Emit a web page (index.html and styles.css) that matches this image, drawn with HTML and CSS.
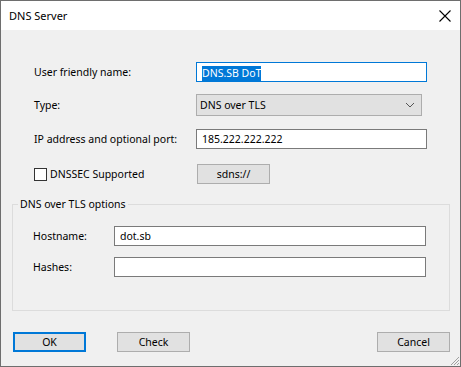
FILE: index.html
```html
<!DOCTYPE html>
<html lang="en">
<head>
    <meta charset="UTF-8">
    <title>DNS Server</title>
    <link rel="stylesheet" href="styles.css">
</head>
<body>
    <div class="window">
        <div class="titlebar">
            <span class="title">DNS Server</span>
            <svg class="close" width="12" height="12" viewBox="0 0 12 12">
                <path d="M0.5 0.5 L11.5 11.5 M11.5 0.5 L0.5 11.5" stroke="#000" stroke-width="1.1" fill="none"/>
            </svg>
        </div>

        <div class="client">
            <div class="row first">
                <span class="label">User friendly name:</span>
                <div class="edit focused"><span class="selected">DNS.SB DoT</span></div>
            </div>
            <div class="row">
                <span class="label">Type:</span>
                <div class="combo">
                    <span>DNS over TLS</span>
                    <svg width="10" height="6" viewBox="0 0 10 6">
                        <path d="M1 1 L5 5 L9 1" stroke="#555" stroke-width="1" fill="none"/>
                    </svg>
                </div>
            </div>
            <div class="row ip">
                <span class="label">IP address and optional port:</span>
                <div class="edit">185.222.222.222</div>
            </div>
            <div class="row check-row">
                <span class="label check-label"><span class="checkbox"></span>DNSSEC Supported</span>
                <div class="button sdns">sdns://</div>
            </div>

            <!-- group box -->
            <fieldset class="group">
                <legend>DNS over TLS options</legend>
                <div class="row">
                    <span class="label small">Hostname:</span>
                    <div class="edit wide">dot.sb</div>
                </div>
                <div class="row hashes">
                    <span class="label small">Hashes:</span>
                    <div class="edit wide"></div>
                </div>
            </fieldset>

            <div class="buttons">
                <div class="button default">OK</div>
                <div class="button">Check</div>
                <div class="button cancel">Cancel</div>
            </div>

            <svg class="grip" width="10" height="10" viewBox="0 0 10 10">
                <path d="M9 1 L1 9 M9 4 L4 9 M9 7 L7 9" stroke="#a0a0a0" stroke-width="1" fill="none"/>
            </svg>
        </div>
    </div>
</body>
</html>
```

FILE: styles.css
```css
body {
    margin: 0;
    font-family: 'Noto Sans', sans-serif;
    font-size: 10.5px;
    color: #000;
    background: #fff;
}

.window {
    width: 461px;
    height: 367px;
    box-sizing: border-box;
    border: 1px solid #6e6e6e;
    display: flex;
    flex-direction: column;
    background: #f0f0f0;
}

.titlebar {
    height: 29px;
    background: #fff;
    display: flex;
    align-items: center;
    justify-content: space-between;
    padding: 0 9px 0 8px;
}

.title {
    font-size: 11px;
}

.close {
    margin-top: 1px;
}

.client {
    flex: 1;
    position: relative;
    display: flex;
    flex-direction: column;
}

.row {
    display: flex;
    align-items: center;
    padding-left: 33px;
    margin-top: 12px;
}

.row.first {
    margin-top: 32px;
}

.row.ip {
    margin-top: 13px;
}

.row.check-row {
    margin-top: 15px;
}

.label {
    flex: 0 0 162px;
    white-space: nowrap;
}

.label.small {
    flex-basis: 81px;
}

.check-label {
    display: flex;
    align-items: center;
}

.checkbox {
    width: 11px;
    height: 11px;
    border: 1px solid #333;
    background: #fff;
    margin-right: 3px;
}

.edit {
    width: 231px;
    height: 20px;
    box-sizing: border-box;
    border: 1px solid #7a7a7a;
    background: #fff;
    padding: 0 5px;
    line-height: 18px;
    white-space: nowrap;
}

.edit.focused {
    border-color: #0078d7;
}

.edit.wide {
    width: 312px;
}

.selected {
    background: #0078d7;
    color: #fff;
    display: inline-block;
    line-height: 15px;
    vertical-align: middle;
}

.combo {
    width: 226px;
    height: 22px;
    box-sizing: border-box;
    border: 1px solid #adadad;
    background: #e1e1e1;
    display: flex;
    align-items: center;
    justify-content: space-between;
    padding: 0 6px 0 3px;
}

.button {
    width: 73px;
    height: 20px;
    box-sizing: border-box;
    border: 1px solid #adadad;
    background: #e1e1e1;
    display: flex;
    align-items: center;
    justify-content: center;
}

.button.sdns {
    margin-left: 1px;
}

.button.default {
    border: 2px solid #0078d7;
}

.group {
    margin: 12px 10px 0 11px;
    padding: 14px 0 33px 0;
    border: 1px solid #dcdcdc;
}

.group legend {
    margin-left: 5px;
    padding: 0 2px;
    line-height: 16px;
}

.group .row {
    padding-left: 20px;
    margin-top: 0;
}

.group .row.hashes {
    margin-top: 11px;
}

.buttons {
    display: flex;
    gap: 31px;
    margin-top: 21px;
    padding: 0 10px 0 12px;
}

.buttons .cancel {
    margin-left: auto;
}

.grip {
    position: absolute;
    right: 0;
    bottom: 0;
}
```
